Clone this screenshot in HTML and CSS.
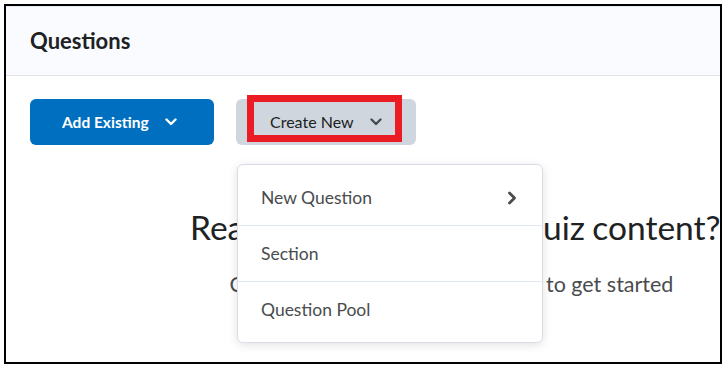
FILE: index.html
```html
<!DOCTYPE html>
<html lang="en">
<head>
  <meta charset="UTF-8" />
  <title>Questions</title>
  <meta name="viewport" content="width=device-width, initial-scale=1.0" />
  <link rel="stylesheet" href="styles.css">
</head>
<body>
  <div class="frame">
    <div class="panel-header">
      <h2>Questions</h2>
    </div>

    <div class="panel-body">
      <div class="actions">
        <button class="btn btn-primary" type="button">
          <span>Add Existing</span>
          <svg class="chev-down" width="12" height="8" viewBox="0 0 12 8"><path d="M1.5 1.5l4.5 4.5 4.5-4.5" fill="none" stroke="currentColor" stroke-width="2.4" stroke-linecap="round" stroke-linejoin="round"/></svg>
        </button>

        <div class="create-wrap">
          <button class="btn btn-secondary" type="button">
            <span>Create New</span>
            <svg class="chev-down" width="12" height="8" viewBox="0 0 12 8"><path d="M1.5 1.5l4.5 4.5 4.5-4.5" fill="none" stroke="currentColor" stroke-width="2.4" stroke-linecap="round" stroke-linejoin="round"/></svg>
          </button>
          <div class="highlight"></div>

          <ul class="menu">
            <li class="menu-item">
              <span>New Question</span>
              <svg width="10" height="14" viewBox="0 0 10 14"><path d="M2.5 2l5 5-5 5" fill="none" stroke="currentColor" stroke-width="2.8" stroke-linecap="round" stroke-linejoin="round"/></svg>
            </li>
            <li class="menu-item"><span>Section</span></li>
            <li class="menu-item"><span>Question Pool</span></li>
          </ul>
        </div>
      </div>

      <div class="empty-state">
        <p class="empty-title">Ready to add your first quiz content?</p>
        <p class="empty-text">Click Add Existing or Create New to get started</p>
      </div>
    </div>
  </div>
</body>
</html>
```

FILE: styles.css
```css
* {
  box-sizing: border-box;
}
body {
  margin: 0;
  padding: 4px;
  background-color: #fff;
  font-family: Lato, "Open Sans", sans-serif;
  color: #202122;
}
.frame {
  width: 718px;
  height: 360px;
  border: 2px solid #000;
  overflow: hidden;
  background-color: #fff;
}
.panel-header {
  background-color: #f9fbff;
  border-top: 1px solid #e6ebf2;
  border-bottom: 1px solid #dfe4ea;
  padding: 20px 24px 20px;
}
.panel-header h2 {
  margin: 0;
  font-size: 22px;
  line-height: 28px;
  font-weight: 700;
  color: #202122;
}
.panel-body {
  padding: 23px 7px 0 24px;
}
.actions {
  display: flex;
  gap: 22px;
}
.btn {
  display: inline-flex;
  align-items: center;
  gap: 16px;
  height: 46px;
  padding-bottom: 2px;
  border: none;
  border-radius: 6px;
  font-family: inherit;
  font-size: 15.5px;
  cursor: pointer;
}
.btn-primary {
  width: 184px;
  padding-left: 32px;
  background-color: #006fbf;
  color: #fff;
  font-weight: 700;
}
.btn-secondary {
  width: 180px;
  padding-left: 34px;
  background-color: #cfd6de;
  color: #202122;
  font-size: 16px;
  font-weight: 400;
}
.btn-secondary .chev-down {
  color: #494c4e;
}
.create-wrap {
  position: relative;
}
.highlight {
  position: absolute;
  left: 11px;
  top: -4px;
  width: 155px;
  height: 47px;
  border: 7px solid #ec1c24;
}
.menu {
  position: absolute;
  left: 1px;
  top: 65px;
  width: 306px;
  margin: 0;
  padding: 5px 0;
  list-style: none;
  background-color: #fff;
  border: 1px solid #d9dee6;
  border-radius: 6px;
  box-shadow: 0 2px 10px rgba(0, 0, 0, 0.12);
}
.menu-item {
  display: flex;
  align-items: center;
  justify-content: space-between;
  height: 55px;
  padding: 0 25px 0 23px;
  font-size: 17.5px;
  color: #494c4e;
}
.menu-item + .menu-item {
  height: 56px;
  border-top: 1px solid #e3e9f1;
}
.menu-item svg {
  color: #494c4e;
}
.empty-state {
  margin: 62px 0 0 160px;
  text-align: center;
  white-space: nowrap;
}
.empty-title {
  margin: 0;
  font-size: 33.5px;
  line-height: 40px;
  word-spacing: -1.2px;
  color: #202122;
}
.empty-text {
  margin: 23px 0 0;
  font-size: 21.5px;
  line-height: 28px;
  color: #494c4e;
}
```
